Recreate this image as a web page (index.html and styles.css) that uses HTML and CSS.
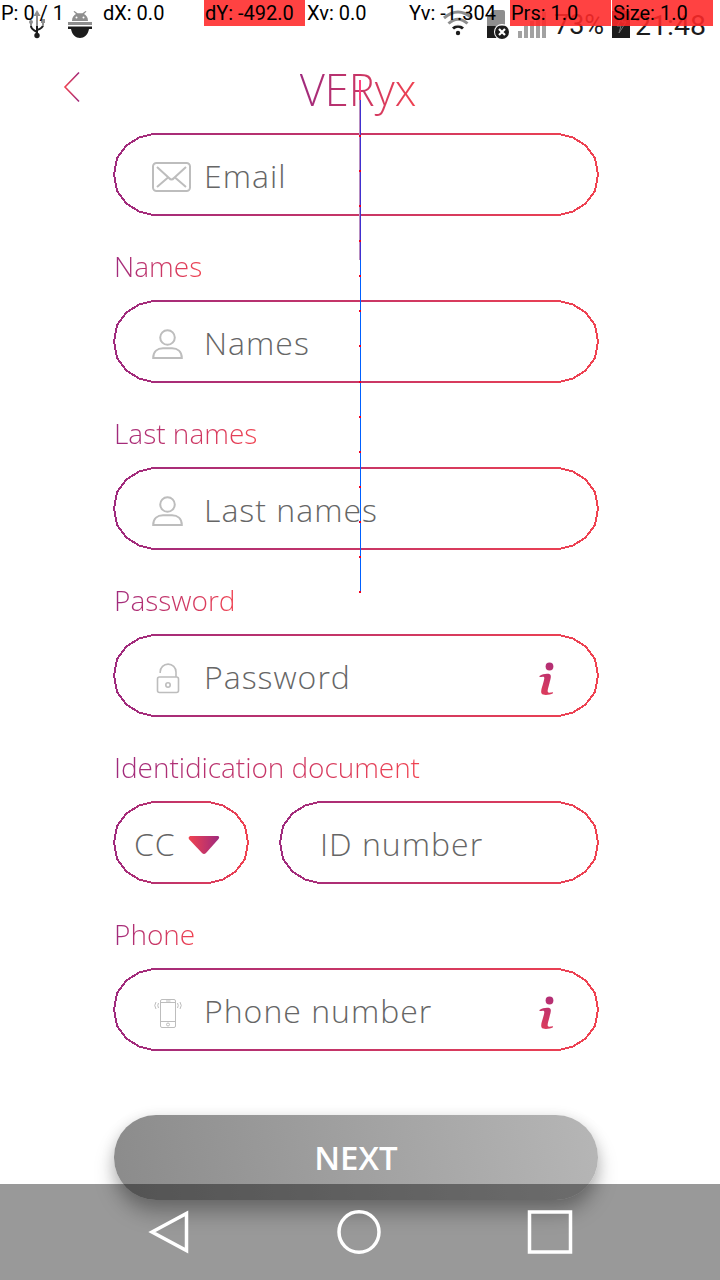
FILE: index.html
```html
<!DOCTYPE html>
<html lang="en">
<head>
<meta charset="utf-8">
<title>VERyx</title>
<link rel="stylesheet" href="styles.css">
</head>
<body>
<svg class="defs" width="0" height="0" aria-hidden="true">
  <defs>
    <linearGradient id="brand" gradientUnits="userSpaceOnUse" x1="0" y1="0" x2="486" y2="0"><stop offset="0" stop-color="#9f2a7d"/><stop offset="1" stop-color="#f04250"/></linearGradient>
    <linearGradient id="brandShort" gradientUnits="userSpaceOnUse" x1="0" y1="0" x2="136" y2="0"><stop offset="0" stop-color="#9f2a7d"/><stop offset="1" stop-color="#f04250"/></linearGradient>
    <linearGradient id="brandMid" gradientUnits="userSpaceOnUse" x1="0" y1="0" x2="320" y2="0"><stop offset="0" stop-color="#9f2a7d"/><stop offset="1" stop-color="#f04250"/></linearGradient>
    <linearGradient id="reverse"><stop offset="0" stop-color="#f04250"/><stop offset="1" stop-color="#9f2a7d"/></linearGradient>
    <linearGradient id="info" gradientUnits="userSpaceOnUse" x1="2" y1="32" x2="14" y2="0"><stop offset="0" stop-color="#dc3c5c"/><stop offset="1" stop-color="#b02d76"/></linearGradient>
    <symbol id="outline" viewBox="0 0 486 83"><path d="M40 1H446L460 4.500L472.500 12.500L482 25L485 41.500L482 58L472.500 70.500L460 78.500L446 82H40L26 78.500L13.500 70.500L4 58L1 41.500L4 25L13.500 12.500L26 4.500Z"/></symbol>
    <symbol id="person" viewBox="0 0 32 32"><circle cx="15.500" cy="9.500" r="7.300"/><path d="M1.200 30C1.200 23.500 5.500 20.200 11 20.200H20C25.500 20.200 29.800 23.500 29.800 30Z"/></symbol>
    <symbol id="infoMark" viewBox="0 0 18 34"><circle cx="10.500" cy="4.500" r="3.900" fill="url(#info)"/><path d="M.5 14C3.500 11.800 8.500 11.200 10.800 12.200C12.800 13.500 11.500 17 10.500 21C9.500 25 8.200 28.500 8.800 30C9.500 31.300 11.800 30.300 14 30.200L14 31.200C11 33 4 33.800 2.600 31.500C1.300 29 3.500 24 4.500 20C5.300 17 5.800 15.300 4.500 14.800C3.500 14.500 2 15 .5 15Z" fill="url(#info)"/></symbol>
  </defs>
</svg>
<main class="screen">
  <div class="status">
    <svg class="status-icon usb" width="18" height="30" viewBox="0 0 18 30"><path d="M9 4V26M3 12V16Q3 19 9 22M15 12V15Q15 18 9 20" fill="none" stroke="#1c1c1c" stroke-width="2"/><path d="M9 0L12.500 6H5.500Z"/><circle cx="9" cy="25.500" r="2.700"/><circle cx="3" cy="12" r="2"/><path d="M13 9H17V13H13Z"/></svg>
    <svg class="status-icon debug" width="24" height="27" viewBox="0 0 24 27"><path d="M4 10C4 6 6 4 8 3L5.500 .5L6.500 0L9.500 2.200H14.500L17.500 0L18.500 .5L16 3C18 4 20 6 20 10ZM0 11H24V14H0ZM0 15.500H24V18H21C20 24 16 27 12 27S4 24 3 18H0Z"/><circle cx="8.500" cy="6.500" r="1" fill="#fff"/><circle cx="15.500" cy="6.500" r="1" fill="#fff"/></svg>
    <svg class="status-icon wifi" width="32" height="26" viewBox="0 0 32 26"><path d="M2 8Q16-4 30 8M6.500 13.500Q16 5 25.500 13.500M11 18.500Q16 14 21 18.500" fill="none" stroke="#1c1c1c" stroke-width="3"/><circle cx="16" cy="23" r="2.200"/></svg>
    <svg class="status-icon sim" width="24" height="29" viewBox="0 0 24 29"><path d="M0 7L7 0H16Q18 0 18 2V28H0Z"/><circle cx="15" cy="22" r="8" fill="#fff"/><circle cx="15" cy="22" r="7"/><path d="M12 19L18 25M18 19L12 25" stroke="#fff" stroke-width="2.200"/></svg>
    <svg class="status-icon signal" width="28" height="26" viewBox="0 0 28 26"><path d="M0 19H4V26H0ZM6 14H10V26H6ZM12 9H16V26H12ZM18 4H22V26H18ZM24 0H28V26H24Z" fill="#a2a2a2"/></svg>
    <span class="status-text percent">73%</span>
    <svg class="status-icon battery" width="18" height="30" viewBox="0 0 18 30"><path d="M0 3H5V0H13V3H18V30H0Z"/><path d="M11 8L5 18H9L7 25L14 14H10Z" fill="none" stroke="#777" stroke-width="1"/></svg>
    <span class="status-text clock">21:48</span>
  </div>

  <div class="metrics">
    <span>P: 0 / 1</span><span>dX: 0.0</span><span class="hot">dY: -492.0</span><span>Xv: 0.0</span><span>Yv: -1.304</span><span class="hot">Prs: 1.0</span><span class="hot">Size: 1.0</span>
  </div>

  <header class="header">
    <svg class="back" width="18" height="32" viewBox="0 0 18 32"><path d="M16 1.500L2 16L16 30.500" fill="none" stroke="url(#reverse)" stroke-width="1.600"/></svg>
    <h1 class="title">VERyx</h1>
  </header>

  <form class="form">
    <div class="field"><svg class="outline" width="486" height="83" stroke="url(#brand)"><use href="#outline"/></svg>
      <svg class="icon mail" width="39" height="30" viewBox="0 0 39 30"><rect x="1" y="1" width="37" height="28" rx="3.500"/><path d="M5 5L17 16Q19.500 19 22 16L34 5M5 25L16 15.500M34 25L23 15.500"/></svg>
      <span class="hint">Email</span></div>

    <div class="label-row"><label class="label">Names</label></div>
    <div class="field"><svg class="outline" width="486" height="83" stroke="url(#brand)"><use href="#outline"/></svg>
      <svg class="icon" width="32" height="32"><use href="#person"/></svg>
      <span class="hint">Names</span></div>

    <div class="label-row"><label class="label">Last names</label></div>
    <div class="field"><svg class="outline" width="486" height="83" stroke="url(#brand)"><use href="#outline"/></svg>
      <svg class="icon" width="32" height="32"><use href="#person"/></svg>
      <span class="hint">Last names</span></div>

    <div class="label-row"><label class="label">Password</label></div>
    <div class="field"><svg class="outline" width="486" height="83" stroke="url(#brand)"><use href="#outline"/></svg>
      <svg class="icon lock" width="32" height="32" viewBox="0 0 32 32"><rect x="5.500" y="15" width="21" height="15.500" rx="2"/><path d="M8.200 11V10A7.700 7.700 0 0 1 24 10V15"/><circle cx="16" cy="23" r="2.200"/></svg>
      <span class="hint">Password</span>
      <svg class="info" width="18" height="34"><use href="#infoMark"/></svg></div>

    <div class="label-row"><label class="label long">Identidication document</label></div>
    <div class="field-pair">
      <div class="field type"><svg class="outline" width="136" height="83" viewBox="0 0 136 83" stroke="url(#brandShort)"><path d="M40 1H96L110 4.500L122.500 12.500L132 25L135 41.500L132 58L122.500 70.500L110 78.500L96 82H40L26 78.500L13.500 70.500L4 58L1 41.500L4 25L13.500 12.500L26 4.500Z"/></svg>
        <span class="hint">CC</span>
        <svg class="caret" width="32" height="19" viewBox="0 0 32 19"><path d="M2 0H30Q32 1 30.500 3L18 17Q16 19 14 17L.8 3Q0 1 2 0Z" fill="url(#reverse)"/></svg></div>
      <div class="field number"><svg class="outline" width="320" height="83" viewBox="0 0 320 83" stroke="url(#brandMid)"><path d="M40 1H280L294 4.500L306.500 12.500L316 25L319 41.500L316 58L306.500 70.500L294 78.500L280 82H40L26 78.500L13.500 70.500L4 58L1 41.500L4 25L13.500 12.500L26 4.500Z"/></svg>
        <span class="hint">ID number</span></div>
    </div>

    <div class="label-row"><label class="label">Phone</label></div>
    <div class="field"><svg class="outline" width="486" height="83" stroke="url(#brand)"><use href="#outline"/></svg>
      <svg class="icon phone" width="32" height="32" viewBox="0 0 32 32"><rect x="8.500" y="3.500" width="15" height="28" rx="1.500"/><path d="M8.500 6.500H23.500M8.500 25.500H23.500M14 5H18.500M6.500 7Q5 9.500 6.500 12M4 6Q1.500 9.500 4 13M25.500 7Q27 9.500 25.500 12M28 6Q30.500 9.500 28 13"/><circle cx="16" cy="28.500" r="1.500"/></svg>
      <span class="hint">Phone number</span>
      <svg class="info" width="18" height="34"><use href="#infoMark"/></svg></div>

    <button class="next" type="button">NEXT</button>
  </form>

  <nav class="navbar">
    <svg width="720" height="96" viewBox="0 0 720 96" fill="none" stroke="#fff" stroke-width="3.500"><path d="M152 48L186.500 29.500V66.500Z"/><ellipse cx="359" cy="48" rx="20" ry="20.300"/><rect x="529.500" y="28" width="41" height="40"/></svg>
  </nav>

  <svg class="trace" width="4" height="520" viewBox="0 0 4 520" shape-rendering="crispEdges"><path d="M1 0H2V180H1Z" fill="#b78cc0"/><path d="M2 0H3V513H2Z" fill="#0060ff"/><path d="M2 20H3V180H2Z" fill="#4030d0"/><path d="M1 0H3V20H1Z" fill="#ff4080"/><path d="M1 55h2v2h-2zM1 90h2v2h-2zM1 125h2v2h-2zM1 160h2v2h-2zM1 195h2v2h-2zM1 230h2v2h-2zM1 265h2v2h-2zM1 301h2v2h-2zM1 336h2v2h-2zM1 371h2v2h-2zM1 406h2v2h-2zM1 441h2v2h-2zM1 476h2v2h-2zM1 511h2v2h-2z" fill="#f00020"/></svg>
</main>
</body>
</html>
```
FILE: styles.css
```css
* { box-sizing: border-box; }
body { margin: 0; background: #fff; font-family: "Open Sans", sans-serif; font-weight: 300; }
.defs { position: absolute; }
.screen { position: relative; width: 720px; height: 1280px; overflow: hidden; background: #fff; }

.status { position: relative; height: 48px; color: #1c1c1c; }
.status-icon { position: absolute; fill: #1c1c1c; }
.usb { left: 28px; top: 10px; }
.debug { left: 68px; top: 11px; }
.wifi { left: 442px; top: 10px; }
.sim { left: 487px; top: 10px; }
.signal { left: 518px; top: 12px; }
.battery { left: 612px; top: 8px; }
.status-text { position: absolute; top: 8px; font: 400 27.500px/34px Roboto, sans-serif; }
.percent { left: 554px; font-size: 27px; }
.clock { left: 635px; top: 9px; font-size: 28.500px; }

/* Touch diagnostics drawn over the status bar */
.metrics { position: absolute; left: 0; top: 0; display: grid; grid-template-columns: repeat(7, 101px); column-gap: 1px; width: 713px; height: 26px; font: 400 20px/27px Roboto, sans-serif; color: #000; }
.metrics span { height: 26px; padding-left: 1px; white-space: nowrap; background: rgba(255, 255, 255, .5); }
.metrics .hot { background: rgba(255, 40, 40, .88); }

.header { position: relative; display: flex; justify-content: center; height: 85px; }
.back { position: absolute; left: 63px; top: 23px; }
.title { margin: 2px 4px 0 0; font-size: 43.500px; line-height: 80px; font-weight: 300; }
.title, .label { color: transparent; background: linear-gradient(90deg, #9f2a7d, #f04250); -webkit-background-clip: text; background-clip: text; }

.form { width: 486px; margin-left: 113px; }
.field { position: relative; display: flex; align-items: center; height: 83px; padding: 2px 42px 0 38px; }
.outline { position: absolute; left: 0; top: 0; fill: none; stroke-width: 2px; shape-rendering: crispEdges; }
.icon { fill: none; stroke: #bdbdbd; stroke-width: 2px; margin-top: 3px; margin-left: 1px; }
.phone { stroke-width: 1px; }
.lock { stroke-width: 1.600px; }
.icon + .hint { margin-left: 20px; }
.mail + .hint { margin-left: 13px; }
.hint { font-size: 32px; line-height: 44px; letter-spacing: 1px; color: #666; white-space: nowrap; }
.info { margin-left: auto; margin-top: 5px; margin-right: 0; }
.label-row { height: 84px; padding-top: 32px; }
.label { display: inline-block; margin-left: 1px; font-size: 28px; line-height: 36px; white-space: nowrap; }
.long { letter-spacing: -.06px; }
.field-pair { display: flex; gap: 30px; }
.type { width: 136px; padding-left: 21px; padding-right: 0; }
.caret { margin-left: 12px; margin-top: 3px; }
.number { width: 320px; padding-left: 41px; }
.next { display: block; width: 484px; height: 85px; margin: 64px 0 0 1px; padding: 0; border: 0; border-radius: 42px; background: linear-gradient(80deg, #8b8b8b, #b6b6b6); box-shadow: 0 14px 20px rgba(0, 0, 0, .26), 0 2px 14px rgba(0, 0, 0, .12); color: #fff; font: 600 33px/84px "Open Sans", sans-serif; }

.navbar { position: absolute; left: 0; bottom: 0; height: 96px; background: rgba(0, 0, 0, .4); }
.trace { position: absolute; left: 358px; top: 80px; }
```
